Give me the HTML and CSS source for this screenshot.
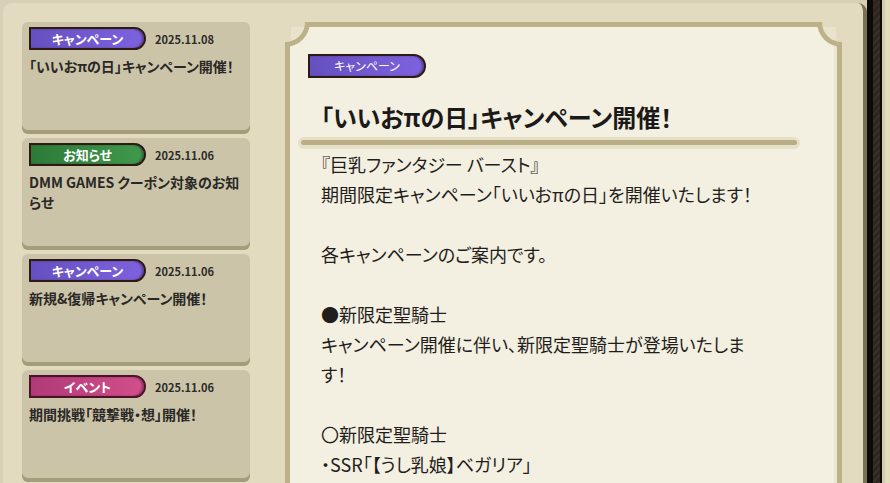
FILE: index.html
```html
<!DOCTYPE html>
<html lang="ja">
<head>
<meta charset="utf-8">
<title>お知らせ</title>
<link rel="stylesheet" href="styles.css">
</head>
<body>
<div class="screen">
  <div class="book">
    <ul class="news-list">
      <li class="news-card">
        <div class="news-head">
          <span class="tag tag-campaign">キャンペーン</span>
          <span class="date">2025.11.08</span>
        </div>
        <p class="news-title">「いいおπの日」キャンペーン開催！</p>
      </li>
      <li class="news-card">
        <div class="news-head">
          <span class="tag tag-info">お知らせ</span>
          <span class="date">2025.11.06</span>
        </div>
        <p class="news-title">DMM GAMES クーポン対象のお知らせ</p>
      </li>
      <li class="news-card">
        <div class="news-head">
          <span class="tag tag-campaign">キャンペーン</span>
          <span class="date">2025.11.06</span>
        </div>
        <p class="news-title">新規&amp;復帰キャンペーン開催！</p>
      </li>
      <li class="news-card">
        <div class="news-head">
          <span class="tag tag-event">イベント</span>
          <span class="date">2025.11.06</span>
        </div>
        <p class="news-title">期間挑戦「競撃戦・想」開催！</p>
      </li>
    </ul>

    <article class="detail">
      <svg class="corner corner-tl" viewBox="0 0 30 30" aria-hidden="true">
        <defs><clipPath id="nl"><circle cx="0" cy="0" r="20"/></clipPath></defs>
        <circle cx="0" cy="0" r="25" fill="#bcb189"/>
        <circle cx="0" cy="0" r="20" fill="#e2dbc0"/>
        <rect x="6" y="5" width="14" height="13" fill="#e9e3cc" clip-path="url(#nl)"/>
      </svg>
      <svg class="corner corner-tr" viewBox="0 0 30 30" aria-hidden="true">
        <defs><clipPath id="nr"><circle cx="0" cy="0" r="20"/></clipPath></defs>
        <circle cx="0" cy="0" r="25" fill="#bcb189"/>
        <circle cx="0" cy="0" r="20" fill="#e2dbc0"/>
        <rect x="6" y="5" width="14" height="13" fill="#e9e3cc" clip-path="url(#nr)"/>
      </svg>

      <span class="tag tag-campaign tag-light">キャンペーン</span>
      <h1 class="detail-title">「いいおπの日」キャンペーン開催！</h1>
      <div class="rule"></div>
      <div class="detail-body">
        <p>『巨乳ファンタジー バースト』<br>期間限定キャンペーン「いいおπの日」を開催いたします！</p>
        <p>各キャンペーンのご案内です。</p>
        <p>●新限定聖騎士<br>キャンペーン開催に伴い、新限定聖騎士が登場いたしま<br>す！</p>
        <p>〇新限定聖騎士<br>・SSR「【うし乳娘】ベガリア」</p>
      </div>
    </article>
  </div>
  <div class="spine"></div>
</div>
</body>
</html>
```

FILE: styles.css
```css
* { box-sizing: border-box; }

html, body {
  margin: 0;
  height: 100%;
}

body {
  background: #d7d0b7;
  overflow: hidden;
  font-family: "Noto Sans CJK JP", "Noto Sans", sans-serif;
  font-feature-settings: "palt";
  color: #2a2826;
}

.screen {
  display: flex;
  height: 483px;
  padding: 3px 0 0 3px;
}

.book {
  width: 864px;
  height: 480px;
  background: #e2dbc0;
  border-radius: 9px 9px 0 0;
  border-right: 4px solid #7b7058;
  padding: 19px 21px 0 19px;
  display: flex;
  gap: 35px;
}

.spine {
  flex: 1;
  margin-top: -3px;
  background:
    repeating-linear-gradient(135deg, rgba(255,255,255,0.05) 0 2px, rgba(0,0,0,0) 2px 5px) 6px 0 / 7px 100% no-repeat,
    linear-gradient(90deg, #0d0b09 0 6px, #2f251f 6px 13px, #0d0b09 13px 15px, #d2cab0 15px 18px, #e2dbc0 18px);
}

/* ---------- list ---------- */
.news-list {
  list-style: none;
  margin: 0;
  padding: 0;
  width: 228px;
  flex: none;
  display: flex;
  flex-direction: column;
  gap: 4px;
}

.news-card {
  height: 112px;
  flex: none;
  background: #cbc4a8;
  border-radius: 6px;
  box-shadow: inset 0 -4px 0 #a59c7b;
  padding: 5px 7px 0;
}

.news-head {
  display: flex;
  align-items: center;
  gap: 9px;
}

.tag {
  display: inline-flex;
  align-items: center;
  justify-content: center;
  width: 117px;
  height: 23px;
  flex: none;
  border: 2px solid #2e1a10;
  border-radius: 0 12px 12px 0;
  color: #ffffff;
  font-size: 13px;
  font-weight: 700;
  line-height: 1;
  box-shadow: inset -2px 0 2px rgba(30, 10, 40, 0.35);
}

.tag-campaign { background: linear-gradient(90deg, #6550c0, #7e62df); }
.tag-info { background: linear-gradient(90deg, #2d7a38, #40994c); }
.tag-event { background: linear-gradient(90deg, #b03a77, #d24f8b); border-color: #4a1428; }

.date {
  font-size: 11px;
  font-weight: 700;
  color: #2c2b29;
}

.news-title {
  margin: 6px 0 0;
  font-size: 14px;
  font-weight: 700;
  line-height: 20px;
  color: #2a2826;
}

/* ---------- detail ---------- */
.detail {
  position: relative;
  width: 557px;
  flex: none;
  background: #f3efe1;
  border: 5px solid #bcb189;
  border-bottom: 0;
  box-shadow: inset -3px 0 0 #ebe6d1;
  padding: 25px 0 0 18px;
}

.corner {
  position: absolute;
  top: -5px;
  width: 30px;
  height: 30px;
}
.corner-tl { left: -5px; }
.corner-tr { right: -5px; transform: scaleX(-1); }

.tag-light {
  width: 118px;
  height: 24px;
  font-size: 12px;
  font-weight: 400;
}

.detail-title {
  margin: 24px 0 0 13px;
  font-size: 24px;
  font-weight: 700;
  line-height: 30px;
  color: #1b1a19;
}

.rule {
  width: 502px;
  height: 12px;
  margin: 5px 0 0 -10px;
  padding: 3px;
  border-radius: 6px;
  background: #e6e0c8;
}
.rule::before {
  content: "";
  display: block;
  height: 5px;
  border-radius: 3px;
  background: #b8ad85;
}

.detail-body {
  margin-left: 13px;
  font-size: 18px;
  line-height: 30px;
  color: #1f1e1c;
}
.detail-body p {
  margin: 0 0 30px;
  white-space: nowrap;
}
```
